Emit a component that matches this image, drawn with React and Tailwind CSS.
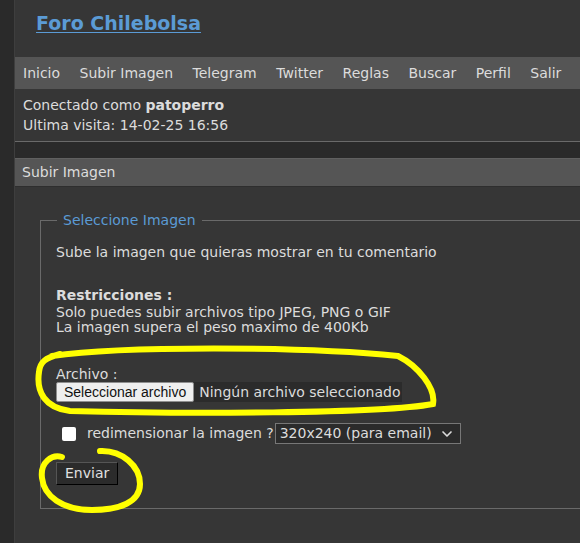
import { ChevronDown } from 'lucide-react';

const nav = ['Inicio', 'Subir Imagen', 'Telegram', 'Twitter', 'Reglas', 'Buscar', 'Perfil', 'Salir'];

function Marks() {
  return (
    <svg className="pointer-events-none absolute left-0 top-0" width="580" height="543" fill="none">
      <path
        d="M52 356 C120 346 300 346 398 356 C418 366 436 388 433 404 C380 414 180 414 70 411 C45 408 36 392 39 372 C40 362 45 358 60 354"
        stroke="#ffff00"
        strokeWidth="6"
        strokeLinecap="round"
      />
      <path
        d="M100 451 C122 450 140 466 140 484 C140 502 120 510 92 510 C62 510 44 496 42 478 C40 462 52 454 62 457"
        stroke="#ffff00"
        strokeWidth="6"
        strokeLinecap="round"
      />
    </svg>
  );
}

export default function App() {
  return (
    <div className="relative h-[543px] w-[580px] overflow-hidden bg-[#2a2a2a] font-['DejaVu_Sans',sans-serif] text-[#dcdcdc]">
      <div className="ml-[14px] h-full w-[640px] border-l border-[#3e3e3e]">
        <div className="border-b border-[#6a6a6a] bg-[#363636]">
          <div className="h-[57px] pl-[21px] pt-[9px]">
            <a href="#" className="text-[19px] font-bold text-[#5b9bd5] underline underline-offset-2">
              Foro Chilebolsa
            </a>
          </div>
          <div className="flex h-[32px] items-center gap-[19.5px] bg-[#555555] pl-[8px] text-[14px]">
            {nav.map((n) => (
              <span key={n}>{n}</span>
            ))}
          </div>
          <div className="px-[8px] pb-[6px] pt-[6px] text-[14px] leading-[20px]">
            <div>
              Conectado como <b>patoperro</b>
            </div>
            <div>Ultima visita: 14-02-25 16:56</div>
          </div>
        </div>

        <div className="mt-[16px] bg-[#363636]">
          <div className="flex h-[28px] items-center border-t border-[#606060] bg-[#555555] px-[7px] text-[14px]">
            Subir Imagen
          </div>
          <div className="h-[400px] border-t border-[#2e2e2e] pl-[25px] pt-[24px]">
            <fieldset className="border border-[#6a6a6a] pb-[23px] pl-[15px] text-[14px] leading-[15px]">
              <legend className="ml-[1px] px-[6px] text-[14px] leading-[18px] text-[#5b9bd5]">Seleccione Imagen</legend>
              <p className="mt-[16px]">Sube la imagen que quieras mostrar en tu comentario</p>
              <p className="mt-[28px] font-bold">Restricciones :</p>
              <p className="mt-[2px]">Solo puedes subir archivos tipo JPEG, PNG o GIF</p>
              <p>La imagen supera el peso maximo de 400Kb</p>
              <p className="mt-[32px]">Archivo :</p>
              <div className="flex items-center text-[14px]">
                <button className="h-[20px] rounded-[2px] border border-[#8f8f8f] bg-[#efefef] px-[7px] font-['Liberation_Sans',sans-serif] text-[#111]">
                  Seleccionar archivo
                </button>
                <span className="flex h-[20px] items-center bg-[#2b2b2b] pl-[5px] pr-[2px]">Ningún archivo seleccionado</span>
              </div>
              <div className="mt-[21px] flex items-center">
                <span className="ml-[6px] h-[14px] w-[14px] rounded-[2px] bg-white"></span>
                <span className="ml-[11px] text-[14px]">redimensionar la imagen ?</span>
                <span className="ml-[1px] flex h-[21px] w-[186px] items-center justify-between border border-[#777] bg-[#2b2b2b] pl-[4px] pr-[5px] text-[14px]">
                  320x240 (para email)
                  <ChevronDown size={16} strokeWidth={2.5} />
                </span>
              </div>
              <button className="mt-[18px] h-[23px] border border-b-black border-l-[#555] border-r-black border-t-[#555] bg-[#2b2b2b] px-[8px] text-[14px] text-[#e0e0e0]">
                Enviar
              </button>
            </fieldset>
          </div>
        </div>
      </div>
      <Marks />
    </div>
  );
}
